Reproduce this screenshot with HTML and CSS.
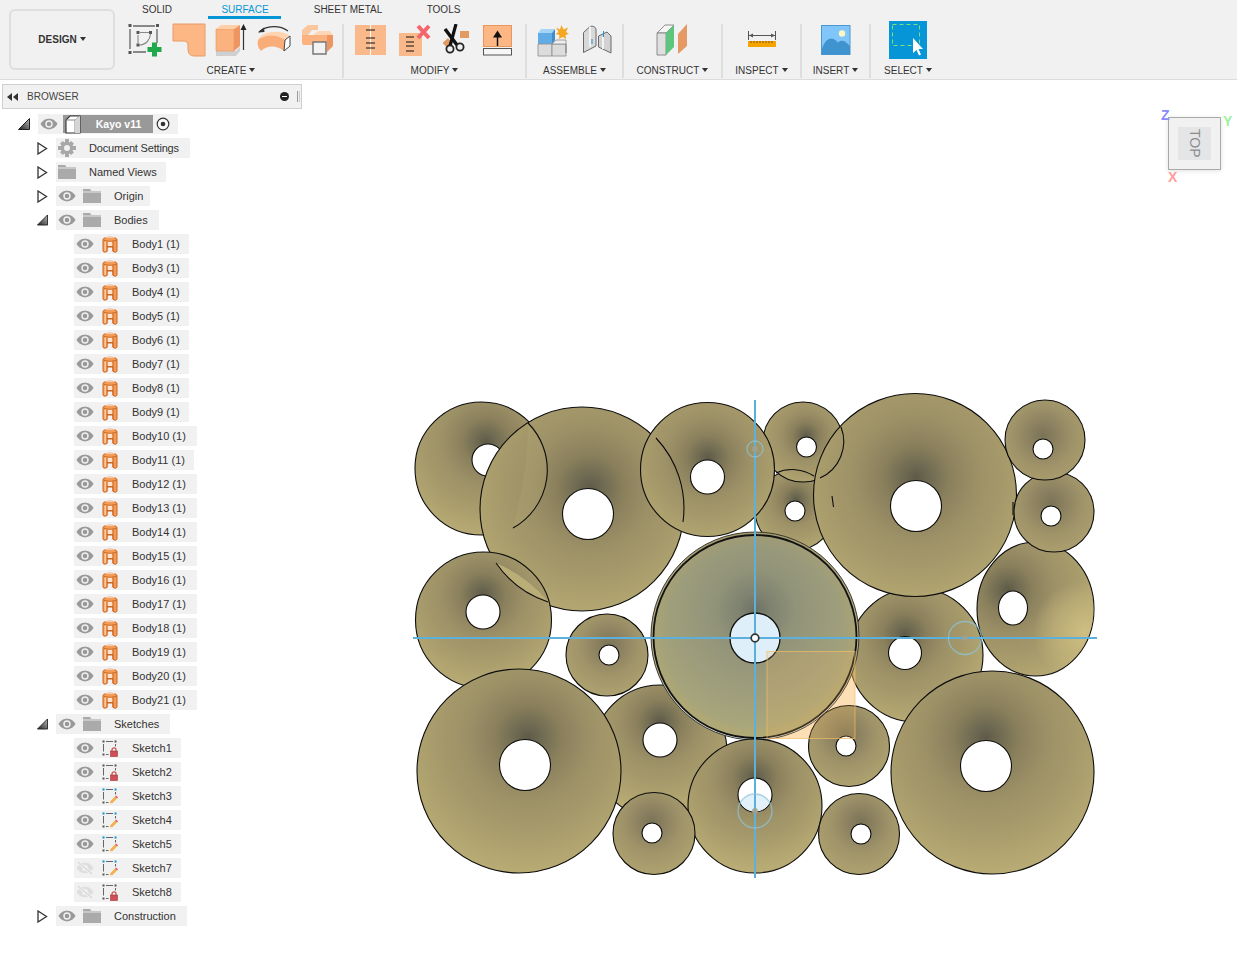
FILE: index.html
```html
<!DOCTYPE html>
<html lang="en">
<head>
<meta charset="utf-8">
<title>Kayo v11</title>
<link rel="stylesheet" href="styles.css">
</head>
<body>
<svg class="defs" width="0" height="0" aria-hidden="true">
  <defs>
    <linearGradient id="tri" x1="0" y1="1" x2="1" y2="0"><stop offset="0" stop-color="#222"/><stop offset="1" stop-color="#bbb"/></linearGradient>
    <symbol id="eye" viewBox="0 0 18 12"><path d="M0.5 6C3 2 6 0.8 9 0.8S15 2 17.5 6C15 10 12 11.2 9 11.2S3 10 0.5 6Z" fill="#999"/><circle cx="9" cy="6" r="3.7" fill="#f1f1f1"/><circle cx="9" cy="6" r="2.3" fill="#999"/></symbol>
    <symbol id="eye-off" viewBox="0 0 18 14"><path d="M0.5 7C3 3 6 1.8 9 1.8S15 3 17.5 7C15 11 12 12.2 9 12.2S3 11 0.5 7Z" fill="#dedede"/><circle cx="9" cy="7" r="3" fill="#f1f1f1"/><path d="M2 1L16 13" stroke="#f1f1f1" stroke-width="3"/><path d="M2 1L16 13" stroke="#d8d8d8" stroke-width="1.2"/></symbol>
    <symbol id="folder" viewBox="0 0 18 14"><path d="M0 0H7L8.500 2H18V14H0Z" fill="#aaa"/><path d="M0 3H18" stroke="#e6e6e6" stroke-width="1"/></symbol>
    <symbol id="gear" viewBox="0 0 18 18"><g fill="#a8a8a8"><path d="M7 0H11V4H7ZM7 14H11V18H7ZM0 7H4V11H0ZM14 7H18V11H14Z"/><path d="M2 4.800L4.800 2L7.600 4.800L4.800 7.600ZM10.400 13.200L13.200 10.400L16 13.200L13.200 16ZM13.200 2L16 4.800L13.200 7.600L10.400 4.800ZM4.800 10.400L7.600 13.200L4.800 16L2 13.200Z"/></g><circle cx="9" cy="9" r="4.600" fill="none" stroke="#a8a8a8" stroke-width="3.200"/></symbol>
    <symbol id="body" viewBox="0 0 16 17"><path d="M1 3.500C1 0.500 15 0.500 15 3.500V15C15 16.500 11 16.500 11 15V11H5V15C5 16.500 1 16.500 1 15Z" fill="#f59d58" stroke="#c9641f"/><path d="M1.500 4C4 5.800 12 5.800 14.500 4" fill="none" stroke="#c9641f"/><path d="M2.500 5.500H4.500V15H2.500Z" fill="#ffc99e"/><path d="M5.500 5.800H10.500V10.500H5.500Z" fill="#ffe3cc"/><path d="M5 5.500V15.500M11 5.500V15.500M5 10.500H11" stroke="#c9641f" fill="none"/><path d="M3.500 1.800C6 1.200 10 1.200 12.500 1.800" stroke="#ffd7b8" fill="none"/></symbol>
    <symbol id="sk-lock" viewBox="0 0 16 17"><path d="M4 1.500H11M1.500 4V11.500M4 14.500H6.500M13.500 4V6.500" stroke="#666" fill="none"/><g fill="#555"><rect x="0.500" y="0.500" width="2" height="2"/><rect x="12.500" y="0.500" width="2" height="2"/><rect x="0.500" y="13.500" width="2" height="2"/></g><path d="M10 11V9.800A2 2 0 0 1 14 9.800V11" fill="none" stroke="#c9474f" stroke-width="1.200"/><rect x="8.500" y="11" width="7" height="5.500" fill="#cf4f56" stroke="#a8333a" stroke-width=".6"/></symbol>
    <symbol id="sk-pen" viewBox="0 0 16 17"><path d="M4 1.500H11M1.500 4V11.500M4 14.500H6.500M13.500 4V6.500" stroke="#666" fill="none"/><g fill="#0696d7"><rect x="0.500" y="0.500" width="2" height="2"/><rect x="12.500" y="0.500" width="2" height="2"/></g><rect x="0.500" y="13.500" width="2" height="2" fill="#555"/><path d="M8 15.500L8.500 13L13 8.500L15 10.500L10.500 15Z" fill="#f2b04e"/><path d="M13 8.500L14 7.500L16 9.500L15 10.500Z" fill="#e2564f"/></symbol>
    <radialGradient id="shade" gradientUnits="userSpaceOnUse">
      <stop offset="0" stop-color="#5f5a47"/><stop offset=".1" stop-color="#6f6a52"/><stop offset=".25" stop-color="#8a805c"/><stop offset=".45" stop-color="#9c9067"/><stop offset=".75" stop-color="#aa9e6d"/><stop offset="1" stop-color="#b8ab74"/>
    </radialGradient>
    <radialGradient id="soft" gradientUnits="userSpaceOnUse">
      <stop offset="0" stop-color="#7a7356"/><stop offset=".2" stop-color="#8a8060"/><stop offset=".5" stop-color="#9f9369"/><stop offset="1" stop-color="#b3a672"/>
    </radialGradient>
    <radialGradient id="d1" href="#shade" gradientUnits="userSpaceOnUse" cx="486" cy="442" r="95"/>
    <radialGradient id="d2" href="#shade" gradientUnits="userSpaceOnUse" cx="590" cy="488" r="135"/>
    <radialGradient id="d3" href="#shade" gradientUnits="userSpaceOnUse" cx="708" cy="458" r="90"/>
    <radialGradient id="d4" href="#shade" gradientUnits="userSpaceOnUse" cx="806" cy="436" r="55"/>
    <radialGradient id="d5" href="#shade" gradientUnits="userSpaceOnUse" cx="916" cy="478" r="135"/>
    <radialGradient id="d6" href="#soft" gradientUnits="userSpaceOnUse" cx="1043" cy="436" r="62"/>
    <radialGradient id="d7" href="#soft" gradientUnits="userSpaceOnUse" cx="1051" cy="503" r="62"/>
    <radialGradient id="d8" href="#shade" gradientUnits="userSpaceOnUse" cx="796" cy="500" r="55"/>
    <radialGradient id="d9" href="#shade" gradientUnits="userSpaceOnUse" cx="1008" cy="590" r="100"/>
    <radialGradient id="d10" href="#shade" gradientUnits="userSpaceOnUse" cx="483" cy="595" r="92"/>
    <radialGradient id="d11" href="#soft" gradientUnits="userSpaceOnUse" cx="609" cy="645" r="58"/>
    <radialGradient id="d12" href="#shade" gradientUnits="userSpaceOnUse" cx="905" cy="635" r="90"/>
    <radialGradient id="d13" href="#shade" gradientUnits="userSpaceOnUse" cx="528" cy="738" r="135"/>
    <radialGradient id="d14" href="#shade" gradientUnits="userSpaceOnUse" cx="660" cy="722" r="90"/>
    <radialGradient id="d15" href="#shade" gradientUnits="userSpaceOnUse" cx="755" cy="778" r="90"/>
    <radialGradient id="d16" href="#soft" gradientUnits="userSpaceOnUse" cx="846" cy="735" r="58"/>
    <radialGradient id="d17" href="#soft" gradientUnits="userSpaceOnUse" cx="652" cy="822" r="58"/>
    <radialGradient id="d18" href="#soft" gradientUnits="userSpaceOnUse" cx="861" cy="823" r="58"/>
    <radialGradient id="d19" href="#shade" gradientUnits="userSpaceOnUse" cx="986" cy="738" r="135"/>
    <radialGradient id="dc" gradientUnits="userSpaceOnUse" cx="755" cy="610" r="128">
      <stop offset="0" stop-color="#6a6d5c"/><stop offset=".12" stop-color="#7d7f6a"/><stop offset=".32" stop-color="#939374"/><stop offset=".6" stop-color="#9f9d78"/><stop offset="1" stop-color="#b1aa76"/>
    </radialGradient>
    <linearGradient id="halo" x1="0" y1="0" x2="0" y2="1"><stop offset="0" stop-color="#a39a6e"/><stop offset=".7" stop-color="#b8b490"/><stop offset=".88" stop-color="#eef2ee"/><stop offset="1" stop-color="#e6f3fa"/></linearGradient>
    <radialGradient id="glow" gradientUnits="userSpaceOnUse" cx="1085" cy="632" r="52"><stop offset="0" stop-color="#cfbf82"/><stop offset=".6" stop-color="#c6b67c" stop-opacity=".6"/><stop offset="1" stop-color="#c6b67c" stop-opacity="0"/></radialGradient>
  </defs>
</svg>

<header class="ribbon">
  <div class="design-wrap">
    <button class="design">DESIGN<span class="caret"></span></button>
  </div>
  <div class="ribbon-main">
    <nav class="tabs">
      <span class="tab tab-solid">SOLID</span>
      <span class="tab tab-surface active">SURFACE</span>
      <span class="tab tab-sheet">SHEET METAL</span>
      <span class="tab tab-tools">TOOLS</span>
    </nav>
    <div class="groups">
      <section class="group g-create">
        <div class="icons">
          <svg width="35" height="38" viewBox="128 22 35 38"><path d="M133 27H155M130 30V50M133 53H146M157 30V44" stroke="#666" stroke-width="1.300" fill="none"/><g fill="#555"><rect x="128.500" y="25" width="3" height="3"/><rect x="156" y="25" width="3" height="3"/><rect x="128.500" y="52" width="3" height="3"/></g><g fill="#555"><rect x="136.500" y="32" width="3" height="3"/><rect x="149" y="32" width="3" height="3"/><rect x="136.500" y="44.500" width="3" height="3"/></g><path d="M140 33.500H149M138 36V44M150.500 35C150 41 146 46 139 46" stroke="#888" stroke-width="1.100" fill="none"/><path d="M152 43.500H157V48H161.500V53H157V57.500H152V53H147.500V48H152Z" fill="#21a84a"/></svg>
          <svg width="34" height="34" viewBox="171 24 34 34"><path d="M172 25H204V57H193Q187 57 187 50V46Q187 42 182 42H172Z" fill="#fdb784" stroke="#e99a66"/></svg>
          <svg width="32" height="36" viewBox="215 23 32 36"><path d="M216 52H236L240 48V52L236 57H216Z" fill="#cfcfcf"/><path d="M216 30H234V52H216Z" fill="#fbb27f" stroke="#e8965f" stroke-width=".6"/><path d="M216 30L221 26H240L234 30Z" fill="#ffcfa9"/><path d="M234 30L240 26V47L234 52Z" fill="#ee9562"/><path d="M243.500 51V29" stroke="#333" stroke-width="1.200"/><path d="M243.500 25L246.500 31H240.500Z" fill="#222"/></svg>
          <svg width="36" height="32" viewBox="256 26 36 32"><path d="M259 34C266 27 280 27 288 33" fill="none" stroke="#333" stroke-width="1.100"/><path d="M258 34.500L264 29.500L264.500 34Z" fill="#333"/><path d="M258 42C262 33 281 31 290 38L285 42C278 36 265 36 258 42Z" fill="#ffd3ae"/><path d="M258 42C265 36 278 36 285 42L284 53C277 47 267 47 261 53C258 50 257 46 258 42Z" fill="#f9ad78"/><path d="M285 42L290 38V48L284 53Z" fill="#fff" stroke="#444"/></svg>
          <svg width="34" height="34" viewBox="301 24 34 34"><path d="M302 36V31L308 26H318V31H312L308 36Z" fill="#f9c69e"/><path d="M302 36H313V46H304C302 46 302 44 302 42Z" fill="#fbb27f"/><path d="M313 36L318 32H330L333 36H327Z" fill="#ffd6b5"/><path d="M313 36H327V43H313Z" fill="#fbb27f"/><path d="M327 36H333V47L327 53Z" fill="#ee9562"/><rect x="313" y="43" width="13" height="12" fill="#f2f2f2" stroke="#777" stroke-width="1.500"/></svg>
        </div>
        <div class="label">CREATE<span class="caret"></span></div>
      </section>
      <section class="group g-modify">
        <div class="icons">
          <svg width="33" height="32" viewBox="354 25 33 32"><rect x="355" y="26" width="31" height="30" fill="#f9b98a"/><path d="M370.500 26V56" stroke="#fff" stroke-width="1"/><path d="M366 31H375M366 39H375M366 44H375M366 49H375" stroke="#111" stroke-width="1"/></svg>
          <svg width="34" height="34" viewBox="397 24 34 34"><rect x="398" y="34" width="23" height="23" fill="#f9b98a"/><path d="M405 38H413M405 43H413M405 47H413M405 52H413" stroke="#111" stroke-width="1"/><path d="M417 27L428 39M428 27L417 39" stroke="#f3666b" stroke-width="4"/></svg>
          <svg width="28" height="32" viewBox="444 25 28 32"><rect x="461" y="32" width="9" height="7" fill="#e19b62"/><path d="M443.500 44L449 39L453 44L448 48.500Z" fill="#e19b62"/><path d="M446 30L458 46" stroke="#111" stroke-width="3.400"/><path d="M457 25L451 47" stroke="#111" stroke-width="3.200"/><circle cx="451" cy="50" r="3.600" fill="#f1f1f1" stroke="#222" stroke-width="1.800"/><circle cx="461" cy="48" r="3.600" fill="#f1f1f1" stroke="#222" stroke-width="1.800"/></svg>
          <svg width="31" height="32" viewBox="483 24 31 32"><rect x="484.500" y="25.500" width="28" height="21" fill="#fdb784" stroke="#e8965f"/><rect x="484.500" y="48.500" width="28" height="6.500" fill="#f6f6f6" stroke="#555"/><path d="M498.500 46V35" stroke="#111" stroke-width="1.500"/><path d="M498.500 30.500L503 37.500H494Z" fill="#111"/></svg>
        </div>
        <div class="label">MODIFY<span class="caret"></span></div>
      </section>
      <section class="group g-assemble">
        <div class="icons">
          <svg width="32" height="34" viewBox="537 24 32 34"><path d="M538 34H552V45H538Z" fill="#62ace6"/><path d="M538 34L541 30H555L552 34Z" fill="#a6d4f7"/><path d="M552 34L555 30V41L552 45Z" fill="#3f8ccc"/><path d="M538 45H552V57H538Z" fill="#dcdcdc" stroke="#8a8a8a" stroke-width=".8"/><path d="M552 45H566V57H552Z" fill="#dcdcdc" stroke="#8a8a8a" stroke-width=".8"/><path d="M552 45L556 41H566V54L566 45Z" fill="#eee" stroke="#8a8a8a" stroke-width=".8"/><path d="M561.500 26L563.500 30.500L568 28.500L566 33L569 35L565.500 36L566 40L562.500 38L559 40L559.500 36L555.500 35L558.500 33L556 28.500L560 30.500Z" fill="#f5a623"/></svg>
          <svg width="30" height="30" viewBox="582 26 30 30"><path d="M583.500 33.500L590 27.500C593 26.500 596 28 596 31V47L583.500 53.500Z" fill="#d8d8d8" stroke="#6a6a6a"/><path d="M590 27.500V48" stroke="#f2f2f2" stroke-width="2"/><path d="M598.500 37L607 33L611 37V54L598.500 48Z" fill="#d2d2d2" stroke="#6a6a6a"/><path d="M603 38V50" stroke="#f2f2f2" stroke-width="2"/><path d="M592 40V45M603.500 32V38" stroke="#1b8fe0"/></svg>
        </div>
        <div class="label">ASSEMBLE<span class="caret"></span></div>
      </section>
      <section class="group g-construct">
        <div class="icons">
          <svg width="34" height="34" viewBox="657 24 34 34"><path d="M658 34L666 26H675L667 34Z" fill="#f5f5f5" stroke="#777" stroke-width=".8"/><path d="M658 34H667V56H658Z" fill="#dfdfdf" stroke="#777" stroke-width=".8"/><path d="M667 34L675 26V48L667 56Z" fill="#5cc77c"/><path d="M679 35L688 25V47L679 55Z" fill="#e59a66"/></svg>
        </div>
        <div class="label">CONSTRUCT<span class="caret"></span></div>
      </section>
      <section class="group g-inspect">
        <div class="icons">
          <svg width="30" height="20" viewBox="747 32 30 20"><path d="M748.500 33V42M775.500 33V42" stroke="#555"/><path d="M749 37.500H775" stroke="#555"/><path d="M749 37.500L753 35.500V39.500ZM775 37.500L771 35.500V39.500Z" fill="#555"/><rect x="748" y="43" width="28" height="6" fill="#f6a500"/><path d="M751 43V45M754 43V45M757 43V45M760 43V45M763 43V45M766 43V45M769 43V45M772 43V45" stroke="#7a5400"/></svg>
        </div>
        <div class="label">INSPECT<span class="caret"></span></div>
      </section>
      <section class="group g-insert">
        <div class="icons">
          <svg width="30" height="30" viewBox="821 25.500 30 30"><rect x="821.500" y="26" width="28.500" height="29" fill="#80c6fb" stroke="#4c98d0"/><circle cx="842" cy="34" r="3.200" fill="#fdf7c3"/><path d="M822 49C826 38 832 36 838 43C841 40 846 41 850 47V55H822Z" fill="#3f93cf"/></svg>
        </div>
        <div class="label">INSERT<span class="caret"></span></div>
      </section>
      <section class="group g-select">
        <div class="icons">
          <svg width="38" height="38" viewBox="889 22 38 38"><rect x="889" y="22" width="38" height="38" fill="#0696d7"/><rect x="892.500" y="25.500" width="27" height="21" fill="none" stroke="#7be07a" stroke-dasharray="4 3"/><path d="M913 39L913 54L916.500 51L919 56.500L921 55.500L918.500 50L923 50Z" fill="#fff"/></svg>
        </div>
        <div class="label">SELECT<span class="caret"></span></div>
      </section>
    </div>
  </div>
</header>

<aside class="browser">
  <div class="browser-head">
    <svg class="rew" width="12" height="8" viewBox="0 0 12 8"><path d="M0 4L5 0V8ZM6 4L11 0V8Z" fill="#333"/></svg>
    <span class="browser-title">BROWSER</span>
    <span class="minus"></span>
    <span class="grip"></span>
  </div>
  <ul class="tree">
    <li class="row lv0"><svg class="tw" width="12" height="12" viewBox="0 0 12 12"><path d="M0.500 11.500L11.500 0.500V11.500Z" fill="url(#tri)" stroke="#222"/></svg><div class="chip"><span class="ic"><svg class="i-eye"><use href="#eye"/></svg></span><span class="root-block"><svg width="18" height="19" viewBox="0 0 18 19"><path d="M2 5L6 1H16V18H2Z" fill="#fff" stroke="#333" stroke-width="1.100"/><path d="M2 5H11V18M11 5L16 1" fill="none" stroke="#888"/><path d="M11 5L16 1V18H11Z" fill="#d5d5d5"/></svg><b>Kayo v11</b></span><span class="ic radio"><svg width="14" height="14" viewBox="0 0 14 14"><circle cx="7" cy="7" r="5.800" fill="#f8f8f8" stroke="#333" stroke-width="1.200"/><circle cx="7" cy="7" r="2.300" fill="#333"/></svg></span></div></li>
    <li class="row lv1"><svg class="tw" width="11" height="13" viewBox="0 0 11 13"><path d="M1 1L9.500 6.500L1 12Z" fill="#fff" stroke="#333" stroke-width="1.300"/></svg><div class="chip wide"><span class="ic"><svg class="i-gear"><use href="#gear"/></svg></span><span class="txt t-doc">Document Settings</span></div></li>
    <li class="row lv1"><svg class="tw" width="11" height="13" viewBox="0 0 11 13"><path d="M1 1L9.500 6.500L1 12Z" fill="#fff" stroke="#333" stroke-width="1.300"/></svg><div class="chip"><span class="ic"><svg class="i-fold"><use href="#folder"/></svg></span><span class="txt">Named Views</span></div></li>
    <li class="row lv1"><svg class="tw" width="11" height="13" viewBox="0 0 11 13"><path d="M1 1L9.500 6.500L1 12Z" fill="#fff" stroke="#333" stroke-width="1.300"/></svg><div class="chip tight"><span class="ic"><svg class="i-eye"><use href="#eye"/></svg></span><span class="ic"><svg class="i-fold"><use href="#folder"/></svg></span><span class="txt">Origin</span></div></li>
    <li class="row lv1"><svg class="tw" width="12" height="12" viewBox="0 0 12 12"><path d="M0.500 11.500L11.500 0.500V11.500Z" fill="url(#tri)" stroke="#222"/></svg><div class="chip wide"><span class="ic"><svg class="i-eye"><use href="#eye"/></svg></span><span class="ic"><svg class="i-fold"><use href="#folder"/></svg></span><span class="txt">Bodies</span></div></li>
    <li class="row lv2"><div class="chip"><span class="ic"><svg class="i-eye"><use href="#eye"/></svg></span><span class="ic"><svg class="i-body"><use href="#body"/></svg></span><span class="txt">Body1 (1)</span></div></li>
    <li class="row lv2"><div class="chip"><span class="ic"><svg class="i-eye"><use href="#eye"/></svg></span><span class="ic"><svg class="i-body"><use href="#body"/></svg></span><span class="txt">Body3 (1)</span></div></li>
    <li class="row lv2"><div class="chip"><span class="ic"><svg class="i-eye"><use href="#eye"/></svg></span><span class="ic"><svg class="i-body"><use href="#body"/></svg></span><span class="txt">Body4 (1)</span></div></li>
    <li class="row lv2"><div class="chip"><span class="ic"><svg class="i-eye"><use href="#eye"/></svg></span><span class="ic"><svg class="i-body"><use href="#body"/></svg></span><span class="txt">Body5 (1)</span></div></li>
    <li class="row lv2"><div class="chip"><span class="ic"><svg class="i-eye"><use href="#eye"/></svg></span><span class="ic"><svg class="i-body"><use href="#body"/></svg></span><span class="txt">Body6 (1)</span></div></li>
    <li class="row lv2"><div class="chip"><span class="ic"><svg class="i-eye"><use href="#eye"/></svg></span><span class="ic"><svg class="i-body"><use href="#body"/></svg></span><span class="txt">Body7 (1)</span></div></li>
    <li class="row lv2"><div class="chip"><span class="ic"><svg class="i-eye"><use href="#eye"/></svg></span><span class="ic"><svg class="i-body"><use href="#body"/></svg></span><span class="txt">Body8 (1)</span></div></li>
    <li class="row lv2"><div class="chip"><span class="ic"><svg class="i-eye"><use href="#eye"/></svg></span><span class="ic"><svg class="i-body"><use href="#body"/></svg></span><span class="txt">Body9 (1)</span></div></li>
    <li class="row lv2"><div class="chip wide"><span class="ic"><svg class="i-eye"><use href="#eye"/></svg></span><span class="ic"><svg class="i-body"><use href="#body"/></svg></span><span class="txt">Body10 (1)</span></div></li>
    <li class="row lv2"><div class="chip"><span class="ic"><svg class="i-eye"><use href="#eye"/></svg></span><span class="ic"><svg class="i-body"><use href="#body"/></svg></span><span class="txt">Body11 (1)</span></div></li>
    <li class="row lv2"><div class="chip wide"><span class="ic"><svg class="i-eye"><use href="#eye"/></svg></span><span class="ic"><svg class="i-body"><use href="#body"/></svg></span><span class="txt">Body12 (1)</span></div></li>
    <li class="row lv2"><div class="chip wide"><span class="ic"><svg class="i-eye"><use href="#eye"/></svg></span><span class="ic"><svg class="i-body"><use href="#body"/></svg></span><span class="txt">Body13 (1)</span></div></li>
    <li class="row lv2"><div class="chip wide"><span class="ic"><svg class="i-eye"><use href="#eye"/></svg></span><span class="ic"><svg class="i-body"><use href="#body"/></svg></span><span class="txt">Body14 (1)</span></div></li>
    <li class="row lv2"><div class="chip wide"><span class="ic"><svg class="i-eye"><use href="#eye"/></svg></span><span class="ic"><svg class="i-body"><use href="#body"/></svg></span><span class="txt">Body15 (1)</span></div></li>
    <li class="row lv2"><div class="chip wide"><span class="ic"><svg class="i-eye"><use href="#eye"/></svg></span><span class="ic"><svg class="i-body"><use href="#body"/></svg></span><span class="txt">Body16 (1)</span></div></li>
    <li class="row lv2"><div class="chip wide"><span class="ic"><svg class="i-eye"><use href="#eye"/></svg></span><span class="ic"><svg class="i-body"><use href="#body"/></svg></span><span class="txt">Body17 (1)</span></div></li>
    <li class="row lv2"><div class="chip wide"><span class="ic"><svg class="i-eye"><use href="#eye"/></svg></span><span class="ic"><svg class="i-body"><use href="#body"/></svg></span><span class="txt">Body18 (1)</span></div></li>
    <li class="row lv2"><div class="chip wide"><span class="ic"><svg class="i-eye"><use href="#eye"/></svg></span><span class="ic"><svg class="i-body"><use href="#body"/></svg></span><span class="txt">Body19 (1)</span></div></li>
    <li class="row lv2"><div class="chip wide"><span class="ic"><svg class="i-eye"><use href="#eye"/></svg></span><span class="ic"><svg class="i-body"><use href="#body"/></svg></span><span class="txt">Body20 (1)</span></div></li>
    <li class="row lv2"><div class="chip wide"><span class="ic"><svg class="i-eye"><use href="#eye"/></svg></span><span class="ic"><svg class="i-body"><use href="#body"/></svg></span><span class="txt">Body21 (1)</span></div></li>
    <li class="row lv1"><svg class="tw" width="12" height="12" viewBox="0 0 12 12"><path d="M0.500 11.500L11.500 0.500V11.500Z" fill="url(#tri)" stroke="#222"/></svg><div class="chip wide"><span class="ic"><svg class="i-eye"><use href="#eye"/></svg></span><span class="ic"><svg class="i-fold"><use href="#folder"/></svg></span><span class="txt">Sketches</span></div></li>
    <li class="row lv2"><div class="chip"><span class="ic"><svg class="i-eye"><use href="#eye"/></svg></span><span class="ic"><svg class="i-body"><use href="#sk-lock"/></svg></span><span class="txt">Sketch1</span></div></li>
    <li class="row lv2"><div class="chip"><span class="ic"><svg class="i-eye"><use href="#eye"/></svg></span><span class="ic"><svg class="i-body"><use href="#sk-lock"/></svg></span><span class="txt">Sketch2</span></div></li>
    <li class="row lv2"><div class="chip"><span class="ic"><svg class="i-eye"><use href="#eye"/></svg></span><span class="ic"><svg class="i-body"><use href="#sk-pen"/></svg></span><span class="txt">Sketch3</span></div></li>
    <li class="row lv2"><div class="chip"><span class="ic"><svg class="i-eye"><use href="#eye"/></svg></span><span class="ic"><svg class="i-body"><use href="#sk-pen"/></svg></span><span class="txt">Sketch4</span></div></li>
    <li class="row lv2"><div class="chip"><span class="ic"><svg class="i-eye"><use href="#eye"/></svg></span><span class="ic"><svg class="i-body"><use href="#sk-pen"/></svg></span><span class="txt">Sketch5</span></div></li>
    <li class="row lv2"><div class="chip"><span class="ic"><svg class="i-eyeoff"><use href="#eye-off"/></svg></span><span class="ic"><svg class="i-body"><use href="#sk-pen"/></svg></span><span class="txt">Sketch7</span></div></li>
    <li class="row lv2"><div class="chip"><span class="ic"><svg class="i-eyeoff"><use href="#eye-off"/></svg></span><span class="ic"><svg class="i-body"><use href="#sk-lock"/></svg></span><span class="txt">Sketch8</span></div></li>
    <li class="row lv1"><svg class="tw" width="11" height="13" viewBox="0 0 11 13"><path d="M1 1L9.500 6.500L1 12Z" fill="#fff" stroke="#333" stroke-width="1.300"/></svg><div class="chip wide"><span class="ic"><svg class="i-eye"><use href="#eye"/></svg></span><span class="ic"><svg class="i-fold"><use href="#folder"/></svg></span><span class="txt">Construction</span></div></li>
  </ul>
</aside>

<svg class="canvas" width="1237" height="975" viewBox="0 0 1237 975" aria-hidden="true">
  <g class="disc">
    <circle cx="481.500" cy="468.500" r="66.500" fill="url(#d1)"/><circle class="hole" cx="488" cy="460" r="16"/>
    <circle cx="582" cy="509" r="102" fill="url(#d2)"/><circle class="hole" cx="588" cy="514" r="25.500"/>
    <path class="lens" d="M528 423A66.500 66.500 0 0 1 513 528Q528 470 528 423Z"/>
    <path class="arc" d="M528 423A66.500 66.500 0 0 1 513 528"/>
    <circle cx="795" cy="510" r="40" fill="url(#d8)"/><circle class="hole" cx="795" cy="511" r="10"/>
    <circle cx="803" cy="442" r="40" fill="url(#d4)"/><circle class="hole" cx="806.500" cy="447" r="10"/>
    <path class="arc" d="M776 473A40 40 0 0 1 814 476"/>
    <circle cx="707.500" cy="469.500" r="67" fill="url(#d3)"/><circle class="hole" cx="707.500" cy="477" r="17"/>
    <path class="arc" d="M656 438A102 102 0 0 1 683 522"/>
    <circle cx="607" cy="655" r="41" fill="url(#d11)"/><circle class="hole" cx="609" cy="655" r="10"/>
    <circle cx="483.500" cy="620" r="68" fill="url(#d10)"/><circle class="hole" cx="483" cy="612" r="17"/>
    <path class="lens2" d="M496 563A102 102 0 0 0 548 601Q525 575 496 563Z"/>
    <path class="arc" d="M496 563A102 102 0 0 0 548 602"/>
    <circle cx="660" cy="752" r="67" fill="url(#d14)"/><circle class="hole" cx="660" cy="740" r="17"/>
    <circle cx="916" cy="655" r="67" fill="url(#d12)"/><circle class="hole" cx="905" cy="653" r="16.500"/>
    <ellipse cx="1035.500" cy="609" rx="58.500" ry="67" fill="url(#d9)"/>
    <ellipse cx="1035.500" cy="609" rx="58" ry="66.500" fill="url(#glow)" class="nostroke"/>
    <ellipse class="hole" cx="1013" cy="608" rx="14.500" ry="17"/>
    <circle cx="519" cy="771" r="102" fill="url(#d13)"/><circle class="hole" cx="525" cy="765" r="25.500"/>
    <circle cx="915" cy="495" r="101.500" fill="url(#d5)"/><circle class="hole" cx="916" cy="506" r="25.500"/>
    <path class="arc" d="M841 427A40 40 0 0 1 820 478"/>
    <path class="arc" d="M832 496L833.500 507M1013 502V515"/>
    <circle cx="1054" cy="512" r="40" fill="url(#d7)"/><circle class="hole" cx="1051" cy="516" r="10"/>
    <circle cx="1045" cy="440" r="40" fill="url(#d6)"/><circle class="hole" cx="1043" cy="449" r="10"/>
    <circle cx="992.500" cy="772.500" r="101.500" fill="url(#d19)"/><circle class="hole" cx="986" cy="766" r="25.500"/>
  </g>
  <rect class="plate" x="767" y="651.500" width="88" height="87"/>
  <circle class="halo" cx="755" cy="636" r="104"/>
  <circle class="core" cx="755" cy="636.500" r="101.500"/>
  <circle class="core-in" cx="755" cy="636" r="93"/>
  <circle class="core-hole" cx="755" cy="638" r="25"/>
  <g class="disc">
    <circle cx="755" cy="806" r="67" fill="url(#d15)"/><circle class="hole" cx="755" cy="795" r="17"/>
    <circle cx="654" cy="833.500" r="41" fill="url(#d17)"/><circle class="hole" cx="652" cy="833" r="10"/>
    <circle cx="859" cy="834" r="40.500" fill="url(#d18)"/><circle class="hole" cx="861" cy="834" r="10"/>
    <circle cx="849" cy="746" r="40.500" fill="url(#d16)"/><circle class="hole" cx="846" cy="746" r="10"/>
  </g>
  <rect class="plate-top" x="767" y="651.500" width="88" height="87"/>
  <path class="pale" d="M740.300 803A17 17 0 0 1 769.700 803A17 17 0 0 1 740.300 803Z"/>
  <g class="axes">
    <path d="M755 400V878"/>
    <path d="M413 638H1097"/>
  </g>
  <circle class="work" cx="755" cy="449" r="8"/><circle class="work-pt" cx="755" cy="449" r="3"/>
  <circle class="work" cx="965" cy="638" r="16.500"/><circle class="work-pt" cx="965" cy="638" r="3"/>
  <circle class="work" cx="755" cy="811" r="17"/><circle class="work-pt" cx="755" cy="811" r="3"/>
  <circle class="origin" cx="755" cy="638" r="3.800"/>
</svg>

<div class="viewcube">
  <div class="cube-face"><span class="cube-text">TOP</span></div>
  <span class="ax ax-z">Z</span>
  <span class="ax ax-y">Y</span>
  <span class="ax ax-x">X</span>
</div>
</body>
</html>
```
FILE: styles.css
```css
* { box-sizing: border-box; }
html, body { margin: 0; padding: 0; background: #fff; }
body {
  width: 1237px;
  height: 975px;
  overflow: hidden;
  position: relative;
  font-family: "Liberation Sans", Arial, sans-serif;
  color: #333;
}
.defs { position: absolute; }

/* Ribbon */
.ribbon {
  display: flex;
  height: 80px;
  background: #f1f1f1;
  border-bottom: 1px solid #dcdcdc;
}
.design-wrap { width: 120px; padding: 9px 0 0 9px; flex: none; }
.design {
  width: 106px;
  height: 61px;
  background: #f1f1f1;
  border: 2px solid #dedede;
  border-radius: 6px;
  font: bold 10px "Liberation Sans", Arial, sans-serif;
  color: #333;
  padding: 0;
}
.caret {
  display: inline-block;
  width: 0;
  height: 0;
  margin-left: 3px;
  vertical-align: 2px;
  border-left: 3.500px solid transparent;
  border-right: 3.500px solid transparent;
  border-top: 4px solid #333;
}
.ribbon-main { flex: 1; }
.tabs { display: flex; gap: 15px; height: 19px; font-size: 10px; }
.tab { text-align: center; line-height: 19px; height: 19px; }
.tab-solid, .tab-surface { width: 73px; padding-left: 1px; }
.tab-sheet { width: 104px; }
.tab-tools { width: 57px; }
.tab.active { color: #0696d7; border-bottom: 3px solid #0696d7; }

.groups { display: flex; height: 56px; margin-top: 2px; }
.group {
  display: flex;
  flex-direction: column;
  align-items: center;
  border-right: 2px solid #dedede;
  height: 54px;
  margin-top: 3px;
}
.group .icons {
  display: flex;
  align-items: center;
  height: 38px;
  margin-top: -3px;
  margin-bottom: 2px;
}
.icons svg { display: block; flex: none; }
.label { font-size: 10px; line-height: 12px; margin-top: 4px; white-space: nowrap; }
.g-create { width: 224px; }
.g-create .icons { gap: 9px; margin-left: 1px; }
.g-modify { width: 183px; }
.g-modify .icons { gap: 11px; margin-right: 2px; }
.g-assemble { width: 97px; }
.g-assemble .icons { gap: 13px; }
.g-construct { width: 99px; }
.g-inspect { width: 79px; }
.g-insert { width: 69px; }
.g-select { width: 74px; border-right: 0; }

/* Browser */
.browser { width: 300px; margin: 4px 0 0 2px; }
.browser-head {
  display: flex;
  align-items: center;
  height: 25px;
  background: #f1f1f1;
  border: 1px solid #cfcfcf;
  padding-left: 4px;
  font-size: 10px;
}
.rew { margin-right: 8px; }
.browser-title { flex: 1; color: #444; }
.minus {
  width: 9px;
  height: 9px;
  border-radius: 50%;
  background: #222;
  position: relative;
  margin-right: 8px;
}
.minus::after {
  content: "";
  position: absolute;
  left: 2px;
  top: 4px;
  width: 5px;
  height: 1px;
  background: #fff;
}
.grip {
  width: 3px;
  height: 11px;
  margin-right: 1px;
  border-left: 1px solid #999;
  border-right: 1px solid #ccc;
}
.tree { list-style: none; margin: 3px 0 0 -2px; padding: 0; font-size: 11px; }
.row { display: flex; align-items: center; height: 24px; }
.lv0 { padding-left: 18px; }
.lv0 .tw { margin-right: 8px; }
.lv1 { padding-left: 37px; }
.lv1 .tw { flex: none; margin-right: 8px; width: 11px; }
.lv2 { padding-left: 74px; }
.chip {
  display: flex;
  align-items: center;
  height: 20px;
  background: #f1f1f1;
  padding-right: 9px;
}
.chip.wide { padding-right: 11px; }
.chip.tight { padding-right: 7px; }
.ic { width: 22px; height: 20px; display: flex; align-items: center; justify-content: center; flex: none; }
.ic + .ic { margin-left: 3px; }
.i-eye { width: 18px; height: 12px; }
.i-eyeoff { width: 18px; height: 14px; }
.i-fold { width: 18px; height: 14px; }
.i-gear { width: 18px; height: 18px; }
.i-body { width: 16px; height: 17px; }
.txt { margin-left: 11px; white-space: nowrap; }
.t-doc { letter-spacing: -0.18px; }
.root-block {
  display: flex;
  align-items: center;
  width: 90px;
  height: 18px;
  margin-left: 3px;
  background: #999;
  color: #fff;
}
.root-block b { flex: 1; text-align: center; font-size: 10.500px; padding-left: 2px; }
.root-block svg { flex: none; margin-left: 1px; }
.radio { margin-left: -1px; }
.lv0 .chip { padding-right: 4px; }

/* Canvas */
.canvas { position: absolute; left: 0; top: 0; pointer-events: none; }
.disc circle, .disc ellipse { stroke: #0c0c0c; stroke-width: 1.100; }
.disc .nostroke { stroke: none; }
.disc .hole { fill: #fff; }
.arc { fill: none; stroke: #0c0c0c; stroke-width: 1.100; }
.lens { fill: #b3a774; opacity: .35; }
.lens2 { fill: #b9ad78; }
.halo { fill: url(#halo); stroke: #3a3a30; stroke-width: 1; }
.core { fill: url(#dc); stroke: #111; stroke-width: 1.800; }
.core-in { fill: #8da0a8; opacity: .1; }
.core-hole { fill: #dfeff9; stroke: #111; stroke-width: 1.300; }
.plate { fill: #ffb95c; fill-opacity: .3; }
.plate-top { fill: #f5b35a; fill-opacity: .2; stroke: #f0bd68; stroke-opacity: .7; }
.pale { fill: #dff0fa; opacity: .9; }
.axes path { stroke: #5cb0dc; stroke-width: 2; fill: none; }
.work { fill: none; stroke: #8cc4d8; stroke-width: 1.300; opacity: .75; }
.work-pt { fill: #a0a090; opacity: .85; }
.origin { fill: #fff; stroke: #333; stroke-width: 1.700; }

/* View cube */
.viewcube {
  position: absolute;
  left: 1168px;
  top: 117px;
  width: 53px;
  height: 53px;
  background: #f1f1f1;
  border: 1px solid #a9a9a9;
  box-shadow: 0 1px 5px rgba(0, 0, 0, .12);
  padding: 9px;
}
.cube-face {
  width: 33px;
  height: 33px;
  background: #e4e5e7;
  display: flex;
  align-items: center;
  justify-content: center;
}
.cube-text {
  writing-mode: vertical-rl;
  font-size: 14px;
  color: #8c8c8c;
  line-height: 1;
}
.ax { position: absolute; font-size: 14px; font-weight: bold; line-height: 1; }
.ax-z { left: -8px; top: -10px; color: #8a8aff; }
.ax-y { left: 54px; top: -4px; color: #9cf29c; }
.ax-x { left: -1px; top: 52px; color: #ff9c9c; }
```
